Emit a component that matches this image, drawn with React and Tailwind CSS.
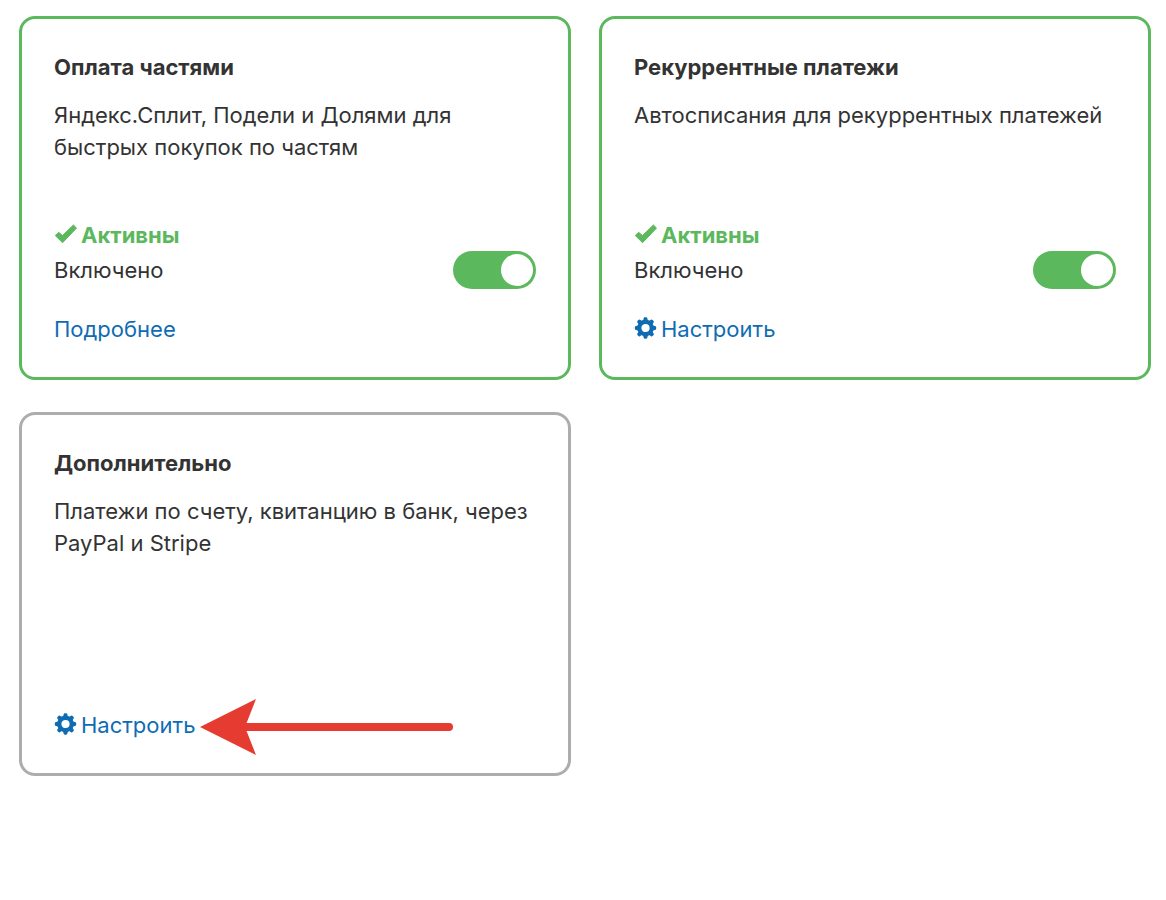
import { useId, useState } from 'react';

const CARDS = [
  {
    id: 'split',
    title: 'Оплата частями',
    description: 'Яндекс.Сплит, Подели и Долями для быстрых покупок по частям',
    enabled: true,
    link: 'Подробнее',
  },
  {
    id: 'recurrent',
    title: 'Рекуррентные платежи',
    description: 'Автосписания для рекуррентных платежей',
    enabled: true,
    link: 'Настроить',
    gear: true,
  },
  {
    id: 'extra',
    title: 'Дополнительно',
    description: 'Платежи по счету, квитанцию в банк, через PayPal и Stripe',
    link: 'Настроить',
    gear: true,
    arrow: true,
  },
];

const TEETH = [0, 45, 90, 135, 180, 225, 270, 315];

function CheckIcon() {
  return (
    <svg className="w-6 h-6 shrink-0" viewBox="0 0 24 24" fill="currentColor" stroke="currentColor" strokeWidth="1" strokeLinejoin="round" aria-hidden="true">
      <path d="M1.3 12.6 L4.6 9.3 L8.5 12.6 L19.4 2 L22.5 5.1 L8.6 19.7 Z" />
    </svg>
  );
}

function GearIcon() {
  return (
    <svg className="w-6 h-6 shrink-0" viewBox="0 0 24 24" fill="currentColor" aria-hidden="true">
      <circle cx="11.5" cy="11" r="6.2" fill="none" stroke="currentColor" strokeWidth="4.2" />
      {TEETH.map((angle) => (
        <path key={angle} d="M8.6 4 Q9.5 3 9.6 1.4 Q9.8 0.4 10.8 0.3 H12.2 Q13.2 0.4 13.4 1.4 Q13.5 3 14.4 4 Z" transform={`rotate(${angle} 11.5 11)`} />
      ))}
    </svg>
  );
}

function Arrow() {
  return (
    <svg className="absolute left-full top-1/2 -translate-y-1/2 ml-[3px] w-64 h-15 max-w-none pointer-events-none" viewBox="0 0 256 60" aria-hidden="true">
      <path d="M2 32 L58 4 L47 32 L58 60 Z" fill="#e53b30" />
      <path d="M44 32 H251" stroke="#e53b30" strokeWidth="8" strokeLinecap="round" />
    </svg>
  );
}

function Switch({ id, checked, onChange }) {
  return (
    <input
      id={id}
      type="checkbox"
      role="switch"
      checked={checked}
      onChange={onChange}
      className="appearance-none shrink-0 flex items-center w-[83px] h-[38px] p-[3px] rounded-full cursor-pointer bg-[#adadad] checked:bg-[#5cb85c] checked:justify-end before:block before:w-8 before:h-8 before:rounded-full before:bg-white"
    />
  );
}

function PaymentCard({ card }) {
  const switchId = useId();
  const hasSwitch = card.enabled !== undefined;
  const [enabled, setEnabled] = useState(Boolean(card.enabled));

  return (
    <section className={`flex flex-col min-h-[364px] p-8 border-3 rounded-2xl ${enabled ? 'border-[#5cb85c]' : 'border-[#adadad]'}`}>
      <h2 className="mb-4 font-bold">{card.title}</h2>
      <p className="mb-8">{card.description}</p>

      <div className="mt-auto">
        {hasSwitch && (
          <div className="mb-6">
            {enabled && (
              <div className="flex items-center gap-[3px] font-bold text-[#5cb85c]">
                <CheckIcon />
                Активны
              </div>
            )}
            <div className="flex items-center justify-between">
              <label htmlFor={switchId}>{enabled ? 'Включено' : 'Выключено'}</label>
              <Switch id={switchId} checked={enabled} onChange={(e) => setEnabled(e.target.checked)} />
            </div>
          </div>
        )}
        <div className="flex">
          <a href={`#${card.id}`} className="relative flex items-center gap-[3px] text-[#0f6cb3] hover:underline">
            {card.gear && <GearIcon />}
            {card.link}
            {card.arrow && <Arrow />}
          </a>
        </div>
      </div>
    </section>
  );
}

export default function App() {
  return (
    <main className="min-h-screen bg-white pt-4 pb-8 pl-[19px] pr-[15px] font-['Inter','Liberation_Sans',sans-serif] text-[22px] leading-8 text-[#333]">
      <div className="grid grid-cols-1 md:grid-cols-2 gap-x-7 gap-y-8">
        {CARDS.map((card) => (
          <PaymentCard key={card.id} card={card} />
        ))}
      </div>
    </main>
  );
}
